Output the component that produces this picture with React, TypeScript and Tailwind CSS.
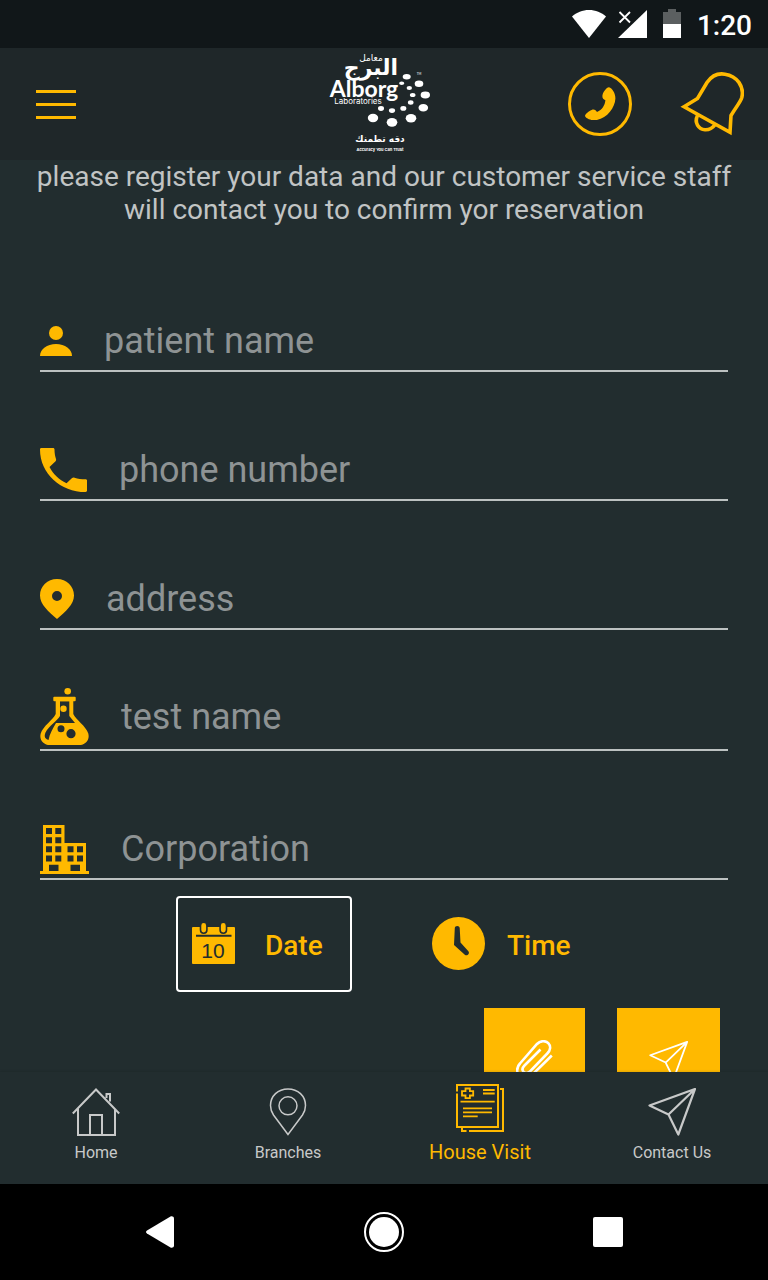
import React from "react";

interface IconProps {
  className?: string;
}

interface Field {
  id: string;
  label: string;
  type: string;
  icon: React.ReactNode;
  spacing: string;
}

interface Tab {
  label: string;
  icon: React.ReactNode;
  active?: boolean;
}

/* ---------- Icons ---------- */

const WifiIcon = () => (
  <svg className="h-7 w-[34px]" viewBox="0 0 34 28" fill="currentColor">
    <path d="M17 28 0 6.500C4.500 2.500 10.500 0 17 0s12.500 2.500 17 6.500z" />
  </svg>
);

const SignalIcon = () => (
  <svg className="h-7 w-[29px]" viewBox="0 0 29 28">
    <path d="M29 0v28H0z" fill="currentColor" />
    <path d="M1.500 2 12 12.500M12 2 1.500 12.500" stroke="currentColor" strokeWidth="1.800" />
  </svg>
);

const BatteryIcon = () => (
  <svg className="h-[30px] w-[18px]" viewBox="0 0 18 30">
    <path d="M5 0h8v3h5v12H0V3h5z" fill="#5b5f60" />
    <path d="M0 15h18v14H0z" fill="currentColor" />
  </svg>
);

const CallIcon = () => (
  <svg className="size-16" viewBox="0 0 64 64">
    <circle cx="32" cy="32" r="30.500" fill="none" stroke="currentColor" strokeWidth="3" />
    <path
      d="M41 15.300c3 .4 6.600 6.200 6.400 11.200-.4 9-8 19.500-18.500 21.400-4.500.8-10-.6-11.800-3.700-.5-2 3.500-5 6.500-6.300 3-1.200 4.200.7 5.400 2 5.200-2 7.900-6.700 8.400-11.700-2-1-3-1.500-3-4 0-3 3.500-8.600 6.600-8.900z"
      fill="currentColor"
    />
  </svg>
);

const BellIcon = () => (
  <svg className="size-16" viewBox="0 0 64 64" fill="none" stroke="currentColor" strokeWidth="3.600">
    <path d="M4 34.700 17.500 26.500 27 10.500C31.500 4 38 1 45 2.200 57 4 64.500 14.500 61.800 25.500 60.500 30 57 33.500 51 43.500L50 60.300z" />
    <path d="M17.500 43.500c-3.500 7 1 14 7.500 14.300 4.500.2 7.500-1.600 10-5" />
  </svg>
);

const PersonIcon = () => (
  <svg className="h-[30px] w-8" viewBox="0 0 32 30" fill="currentColor">
    <circle cx="16" cy="7" r="7" />
    <path d="M0 30c0-7 7-12 16-12s16 5 16 12z" />
  </svg>
);

const PhoneIcon = () => (
  <svg className="h-11 w-[47px]" viewBox="0 0 47 44" fill="currentColor">
    <path d="M1.500 0H13c1 0 1.500.6 1.500 1.500 0 3.400.5 6.500 1.500 9.500.3 1 .1 1.800-.7 2.600L9.500 19c4 7.500 9.500 12.500 17 16.300l5.300-5c.8-.7 1.800-.9 2.700-.6 3.300 1 7 1.500 11 1.500 1 0 1.500.6 1.500 1.400v10c0 .8-.5 1.400-1.500 1.400C20.500 44 0 25.500 0 1.400 0 .6.500 0 1.500 0z" />
  </svg>
);

const AddressIcon = () => (
  <svg className="h-10 w-[34px]" viewBox="0 0 34 40" fill="currentColor">
    <path
      fillRule="evenodd"
      d="M17 0C7.500 0 0 7.200 0 16.500 0 25.500 8.500 32.500 17 40c8.500-7.500 17-14.500 17-23.500C34 7.200 26.500 0 17 0zm0 12a5 5 0 1 1 0 10 5 5 0 0 1 0-10z"
    />
  </svg>
);

const FlaskIcon = () => (
  <svg className="h-[57px] w-[49px]" viewBox="0 0 49 57" fill="currentColor">
    <circle cx="27.700" cy="3.300" r="3.300" />
    <circle cx="23.500" cy="20.700" r="3.200" />
    <rect x="13.300" y="8.700" width="22.400" height="4.600" rx="1" />
    <path
      fillRule="evenodd"
      d="M15.700 12v14C13 32 3 38 .7 45.500-1 52 3.500 57 10 57h29c6.500 0 11-5 9.300-11.500C46 38 36 32 33.300 26V12zM20 13.300h9.300V28L35 35H16c-3 5-6.500 11-7.500 17C4.500 51 4 48 5.500 44.500 9 38 17.500 32.500 20 28zM21 37.200a3.500 3.500 0 1 1 0 7 3.500 3.500 0 0 1 0-7zM31 41.100a4.600 4.600 0 1 1 0 9.200 4.600 4.600 0 0 1 0-9.200z"
    />
  </svg>
);

const BuildingIcon = () => (
  <svg className="size-[49px]" viewBox="0 0 49 49" fill="currentColor">
    <path
      fillRule="evenodd"
      d="M3 0h21.500v18H46v28h3v3H0v-3h3zM6 3v6h6V3zM15.300 3v6h6V3zM6 12.300v6h6v-6zM15.300 12.300v6h6v-6zM6 21.300v6h6v-6zM15.300 21.300v6h6v-6zM6 30.500v6h6v-6zM15.300 30.500v6h6v-6zM27.500 21.300v6h6v-6zM37 21.300v6h6v-6zM27.500 30.500v6h6v-6zM37 30.500v6h6v-6zM9 39.700V46h9.500v-6.300zM30.500 39.700V46H40v-6.300z"
    />
  </svg>
);

const CalendarIcon = () => (
  <svg className="h-[41px] w-[43px]" viewBox="0 0 43 41">
    <rect y="4" width="43" height="37" rx="1" fill="currentColor" />
    <path d="M11.700 2.500v4.500M31.300 2.500v4.500" stroke="#222d2f" strokeWidth="8" strokeLinecap="round" />
    <path d="M11.700 2.500v4.500M31.300 2.500v4.500" stroke="currentColor" strokeWidth="4.800" strokeLinecap="round" />
    <path d="M4 12.800h35.500" stroke="#222d2f" strokeWidth="2" />
    <text x="21" y="35" textAnchor="middle" fontSize="21" fontWeight="400" fontFamily="'Liberation Sans', sans-serif" fill="#222d2f">
      10
    </text>
  </svg>
);

const ClockIcon = () => (
  <svg className="size-[53px]" viewBox="0 0 53 53">
    <circle cx="26.500" cy="26.500" r="26.500" fill="currentColor" />
    <path
      d="M22.800 11c0-2.700 4.800-2.700 4.900 0l.8 14.500 7.900 8.700c1.800 2.200-1.200 5.300-3.600 3.600L22 28z"
      fill="#222d2f"
    />
  </svg>
);

const PaperclipIcon = () => (
  <svg className="h-10 w-[37px]" viewBox="0 0 37 40" fill="none" stroke="currentColor" strokeWidth="2.600">
    <path d="M35.800 15.500 14 37C10 40 4 39 2 34.500c-1.500-4-.8-8 2-11L21 4c3.500-3.500 8.500-3.700 11.300-.8 2.800 3 2.200 7-1 10.300L14 31.500c-2 2-5 2-6.500.3s-1-4.300 1-6.300l16-16" />
  </svg>
);

const SendIcon = ({ className = "" }: IconProps) => (
  <svg className={className} viewBox="0 0 48 48" fill="none" stroke="currentColor" strokeWidth="2.200" strokeLinejoin="round">
    <path d="M1.500 17.500 47 1 30.300 46.500 20.500 26.500zM20.500 26.500 47 1" />
  </svg>
);

const HomeIcon = () => (
  <svg className="size-12" viewBox="0 0 48 48" fill="none" stroke="currentColor" strokeWidth="2">
    <path d="M.8 25.500 24 1.500l23.200 24M6 20.500V47h37V20.500M18 47V27h12v20M34.500 10V6H38v7.500" />
  </svg>
);

const BranchesIcon = () => (
  <svg className="size-12" viewBox="0 0 48 48" fill="none" stroke="currentColor" strokeWidth="1.500">
    <path d="M24 46.500 9.500 27C7.500 24 6.500 21.500 6.500 17.500 6.500 8 14 .9 24 .9S41.500 8 41.500 17.500c0 4-1 6.500-3 9.500z" />
    <circle cx="24" cy="17.800" r="9" />
  </svg>
);

const ReportIcon = () => (
  <svg className="size-12" viewBox="0 0 48 48" fill="none" stroke="currentColor" strokeWidth="2">
    <path d="M1 7.500V1h41v42H1V9.500M44 5h3v42H13M10.500 47H6v-4" />
    <path
      strokeWidth="1.800"
      d="M9.500 4.500h4.400v2.600h3.300v4.400h-3.300v2.600H9.500v-2.600H6V7.100h3.500zM27 6h11.700M27 9.500h11.700M4.500 17.700h34.200M7 24.300h29M7 28.300h29M7 32.300h14.700"
    />
  </svg>
);

/* ---------- Logo ---------- */

const logoDots = [
  [78.7, 28.7, 4, 2.7],
  [91, 35.7, 4.3, 3.2],
  [97.3, 47, 4.7, 3.4],
  [95.3, 59.7, 4.8, 3.8],
  [83, 70.3, 5.3, 4.2],
  [64, 74.3, 5.3, 4.4],
  [45, 70, 5.2, 4.2],
  [73.7, 35.3, 2.6, 1.8],
  [81.3, 40, 2.7, 2],
  [84.7, 47, 2.8, 2.1],
  [82.7, 54.5, 2.8, 2.2],
  [75.3, 60.4, 3, 2.3],
  [64, 62.6, 3.1, 2.4],
  [53, 60.5, 3, 2.4],
];

const Logo = () => (
  <svg className="size-28" viewBox="0 0 112 112" fill="white" role="img" aria-label="Alborg Laboratories">
    {logoDots.map(([cx, cy, rx, ry]) => (
      <ellipse key={`${cx}-${cy}`} cx={cx} cy={cy} rx={rx} ry={ry} />
    ))}
    <g fontFamily="'DejaVu Sans', sans-serif" textAnchor="middle">
      <text x="43" y="13" fontSize="9">معامل</text>
      <text x="43" y="27" fontSize="22" fontWeight="bold">البرج</text>
      <text x="52" y="94" fontSize="9" fontWeight="bold">دقه تطمنك</text>
    </g>
    <g fontFamily="Lato, sans-serif" textAnchor="middle">
      <text x="36" y="49" fontSize="23" fontWeight="bold">Alborg</text>
      <text x="91" y="27" fontSize="3">TM</text>
    </g>
    <g fontFamily="Inter, sans-serif" textAnchor="middle">
      <text x="30" y="56" fontSize="8">Laboratories</text>
      <text x="52" y="103" fontSize="4" fontWeight="bold">Accuracy You Can Trust</text>
    </g>
  </svg>
);

/* ---------- Data ---------- */

const fields: Field[] = [
  { id: "patient", label: "patient name", type: "text", icon: <PersonIcon />, spacing: "mt-[86px]" },
  { id: "phone", label: "phone number", type: "tel", icon: <PhoneIcon />, spacing: "mt-[69px]" },
  { id: "address", label: "address", type: "text", icon: <AddressIcon />, spacing: "mt-[69px]" },
  { id: "test", label: "test name", type: "text", icon: <FlaskIcon />, spacing: "mt-[54px]" },
  { id: "corporation", label: "Corporation", type: "text", icon: <BuildingIcon />, spacing: "mt-[69px]" },
];

const tabs: Tab[] = [
  { label: "Home", icon: <HomeIcon /> },
  { label: "Branches", icon: <BranchesIcon /> },
  { label: "House Visit", icon: <ReportIcon />, active: true },
  { label: "Contact Us", icon: <SendIcon className="size-12" /> },
];

/* ---------- Sections ---------- */

const StatusBar = () => (
  <div className="flex h-12 shrink-0 items-center justify-end bg-[#111719] pr-4 text-white">
    <WifiIcon />
    <div className="ml-3">
      <SignalIcon />
    </div>
    <div className="ml-4">
      <BatteryIcon />
    </div>
    <span className="ml-4 pt-1 text-[28px] leading-8 font-medium">1:20</span>
  </div>
);

const Header = () => (
  <header className="grid h-28 shrink-0 grid-cols-[1fr_auto_1fr] items-center bg-[#1f2729] px-6 text-[#ffb900]">
    <button type="button" aria-label="Menu" className="ml-3 flex w-10 flex-col gap-[10px]">
      <span className="h-[3px] bg-[#ffb900]" />
      <span className="h-[3px] bg-[#ffb900]" />
      <span className="h-[3px] bg-[#ffb900]" />
    </button>
    <Logo />
    <div className="flex justify-end gap-12">
      <button type="button" aria-label="Call">
        <CallIcon />
      </button>
      <button type="button" aria-label="Notifications">
        <BellIcon />
      </button>
    </div>
  </header>
);

const FormField = ({ id, label, type, icon, spacing }: Field) => (
  <div className={`flex min-h-[60px] items-center gap-8 border-b-2 border-[#bcc1c1] py-1 ${spacing}`}>
    <label htmlFor={id} className="shrink-0 text-[#ffb900]">
      {icon}
    </label>
    <input
      id={id}
      type={type}
      placeholder={label}
      aria-label={label}
      className="h-11 min-w-0 flex-1 bg-transparent text-[36px] text-white outline-none placeholder:text-[#8e9394]"
    />
  </div>
);

const TabBar = () => (
  <nav className="grid h-28 shrink-0 grid-cols-4 bg-[#222d2f] shadow-[0_-1px_2px_rgba(0,0,0,0.1)]">
    {tabs.map((tab) => (
      <a
        key={tab.label}
        href="#"
        className={`flex flex-col items-center ${
          tab.active ? "pt-3 text-xl leading-10 text-[#ffb900]" : "pt-4 text-base leading-[34px] text-[#c8c9c9]"
        }`}
      >
        {tab.icon}
        <span>{tab.label}</span>
      </a>
    ))}
  </nav>
);

const SystemBar = () => (
  <div className="grid h-24 shrink-0 grid-cols-3 place-items-center bg-black px-12 text-white">
    <button type="button" aria-label="Back">
      <svg className="h-8 w-7" viewBox="0 0 28 32" fill="currentColor">
        <path d="M1 14.500 24.500.5C26 0 28 .5 28 2.500v27c0 2-2 2.500-3.500 2L1 17.500c-1.300-1-1.300-2 0-3z" />
      </svg>
    </button>
    <button type="button" aria-label="Home screen" className="rounded-full border-2 border-white p-[3px]">
      <span className="block size-[30px] rounded-full bg-white" />
    </button>
    <button type="button" aria-label="Recent apps" className="size-[30px] rounded-xs bg-white" />
  </div>
);

export default function App() {
  return (
    <div className="flex h-screen flex-col bg-[#222d2f] font-[Roboto,sans-serif]">
      <StatusBar />
      <Header />
      <main className="min-h-0 flex-1 overflow-hidden">
        <form className="flex flex-col px-10">
          <p className="-mx-4 text-center text-[28px] leading-[33px] text-[#c1c4c4]">
            please register your data and our customer service staff will contact you to confirm yor reservation
          </p>
          {fields.map((field) => (
            <FormField key={field.id} {...field} />
          ))}
          <div className="mt-4 flex justify-center gap-16 text-[28px] font-medium text-[#ffb900]">
            <button
              type="button"
              className="flex h-24 w-44 items-center gap-[30px] rounded border-2 border-white pb-0.5 pl-[14px]"
            >
              <CalendarIcon />
              <span className="pt-1.5">Date</span>
            </button>
            <button type="button" className="flex h-24 w-44 items-center gap-[22px] pb-0.5 pl-4">
              <ClockIcon />
              <span className="pt-1.5">Time</span>
            </button>
          </div>
          <div className="mt-4 flex justify-end gap-8 pr-2 text-white">
            <button type="button" aria-label="Attach file" className="bg-[#ffb900] p-8">
              <PaperclipIcon />
            </button>
            <button type="submit" aria-label="Send" className="bg-[#ffb900] p-8">
              <SendIcon className="size-[39px]" />
            </button>
          </div>
        </form>
      </main>
      <TabBar />
      <SystemBar />
    </div>
  );
}
